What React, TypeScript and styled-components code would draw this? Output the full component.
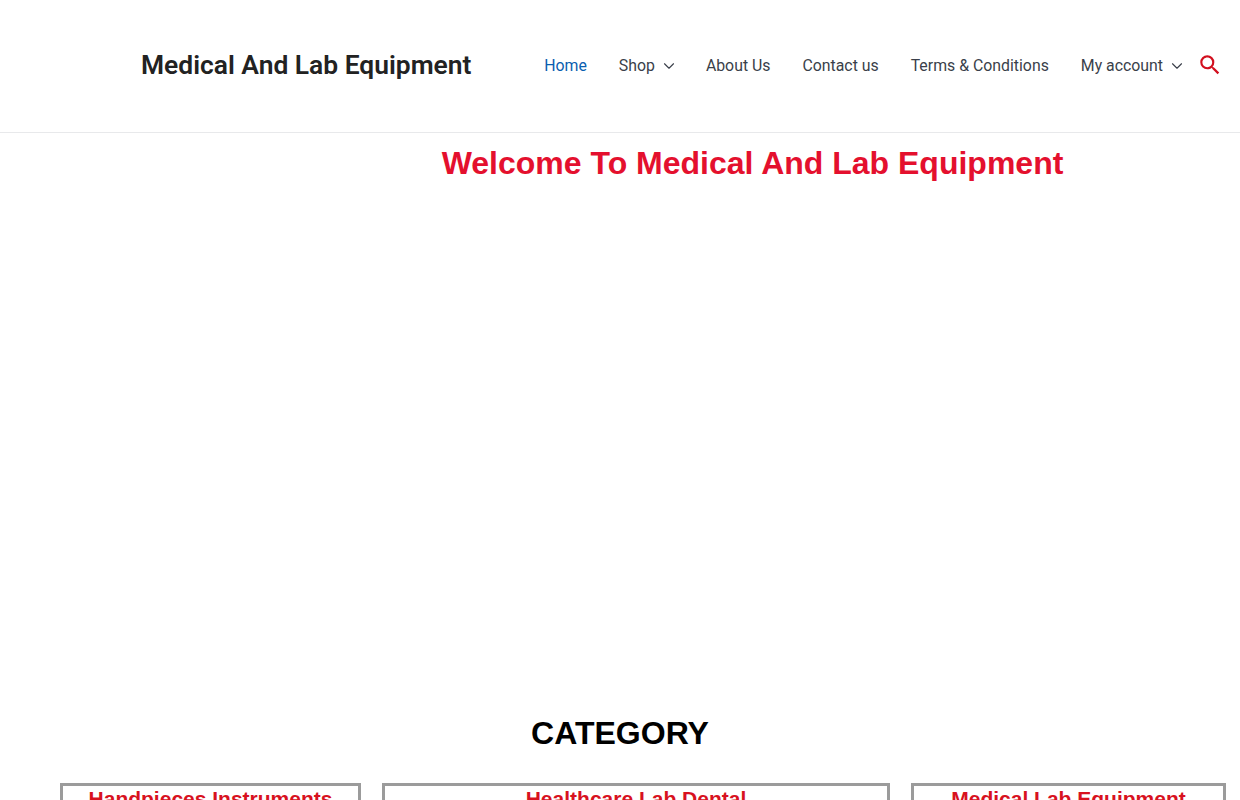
import styled, { createGlobalStyle } from "styled-components";
import { ChevronDown } from "lucide-react";
import { MdSearch } from "react-icons/md";

const GlobalStyle = createGlobalStyle`
  html, body {
    margin: 0;
    padding: 0;
    background: #fff;
    overflow: hidden;
  }
  body {
    font-family: Roboto, "Liberation Sans", sans-serif;
  }
`;

const Page = styled.div`
  width: 1240px;
  height: 800px;
  overflow: hidden;
`;

const Header = styled.header`
  box-sizing: border-box;
  height: 133px;
  border-bottom: 1px solid #e8e9eb;
  padding: 0 17px 2px 141px;
  display: flex;
  align-items: center;
  justify-content: space-between;
`;

const SiteTitle = styled.a`
  font-size: 26.4px;
  font-weight: 600;
  color: #222;
  line-height: 1;
`;

const Nav = styled.nav`
  display: flex;
  align-items: center;
`;

const NavItem = styled.a<{ $active?: boolean }>`
  display: flex;
  align-items: center;
  gap: 9px;
  padding: 0 16px;
  font-size: 15.85px;
  color: ${({ $active }) => ($active ? "#0a5eb0" : "#3a3f4a")};
`;

const Caret = styled(ChevronDown)`
  margin: 1px -4px 0;
`;

const SearchButton = styled.span`
  display: flex;
  margin: 0 0 0 -1px;
  color: #d20f1e;
  font-size: 26px;
`;

const Welcome = styled.h1`
  margin: 0;
  padding: 11px 0 0 265px;
  height: 545px;
  box-sizing: border-box;
  text-align: center;
  font: bold 32px/38px "Liberation Sans", Arial, sans-serif;
  color: #e4102e;
`;

const CategoryTitle = styled.h2`
  margin: 0;
  padding-top: 36px;
  text-align: center;
  font: bold 32px/39px "Liberation Sans", Arial, sans-serif;
  color: #000;
`;

const CategoryRow = styled.div`
  display: grid;
  grid-template-columns: 301px 508px 315px;
  column-gap: 21px;
  margin: 30px 0 0 60px;
`;

const CategoryCard = styled.div`
  border: 3px solid #9b9b9b;
  height: 200px;
  text-align: center;
  font: bold 21px/24px "Liberation Sans", Arial, sans-serif;
  color: #d8121f;
  padding-top: 1px;
`;

const navLinks = [
  { label: "Home", active: true },
  { label: "Shop", caret: true },
  { label: "About Us" },
  { label: "Contact us" },
  { label: "Terms & Conditions" },
  { label: "My account", caret: true },
];

const categories = ["Handpieces Instruments", "Healthcare Lab Dental", "Medical Lab Equipment"];

export default function App() {
  return (
    <Page>
      <GlobalStyle />
      <Header>
        <SiteTitle>Medical And Lab Equipment</SiteTitle>
        <Nav>
          {navLinks.map(({ label, active, caret }) => (
            <NavItem key={label} $active={active}>
              {label}
              {caret && <Caret size={18} strokeWidth={1.5} />}
            </NavItem>
          ))}
          <SearchButton>
            <MdSearch />
          </SearchButton>
        </Nav>
      </Header>
      <Welcome>Welcome To Medical And Lab Equipment</Welcome>
      <CategoryTitle>CATEGORY</CategoryTitle>
      <CategoryRow>
        {categories.map((name) => (
          <CategoryCard key={name}>{name}</CategoryCard>
        ))}
      </CategoryRow>
    </Page>
  );
}
